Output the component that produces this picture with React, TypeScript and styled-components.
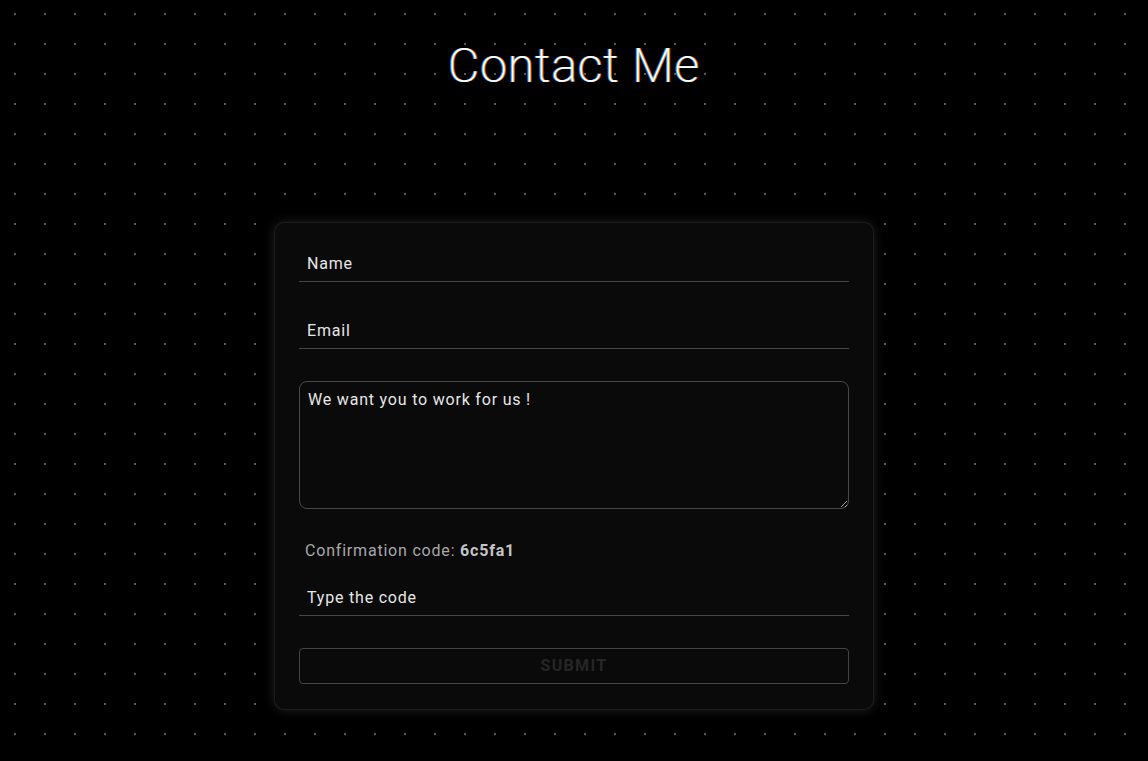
import React from "react";
import styled, { createGlobalStyle } from "styled-components";

const GlobalStyle = createGlobalStyle`
  html, body {
    margin: 0;
    padding: 0;
    background: #000;
  }
  body {
    font-family: Roboto, "Noto Sans", sans-serif;
    color: #e6e6e6;
  }
  * { box-sizing: border-box; }
`;

const Page = styled.main`
  min-height: 761px;
  background-color: #000;
  background-image: radial-gradient(circle at center, #5a5a5a 0.9px, transparent 1.2px);
  background-size: 30px 30px;
  background-position: 0 -1px;
  display: flex;
  flex-direction: column;
  align-items: center;
  padding-top: 38px;
`;

const Title = styled.h1`
  margin: 0;
  font-family: Roboto, sans-serif;
  font-weight: 200;
  font-size: 48px;
  line-height: 56px;
  color: #fff;
  letter-spacing: 1px;
  text-shadow: -1px 0 rgba(40, 170, 255, 0.85), 1px 0 rgba(255, 140, 40, 0.85);
`;

const Card = styled.form`
  margin-top: 128px;
  width: 600px;
  padding: 23px 24px 25px;
  background: #0a0a0a;
  border: 1px solid rgba(255, 255, 255, 0.08);
  border-radius: 10px;
  box-shadow: 0 0 12px rgba(255, 255, 255, 0.12);
  display: flex;
  flex-direction: column;
`;

const LineInput = styled.input<{ $gap?: number }>`
  display: block;
  width: 100%;
  height: 36px;
  margin-bottom: ${(p) => p.$gap ?? 31}px;
  padding: 0 8px;
  background: transparent;
  border: none;
  border-bottom: 1px solid #464646;
  outline: none;
  font-family: Roboto, sans-serif;
  font-size: 16px;
  letter-spacing: 0.8px;
  color: #e6e6e6;
  &::placeholder {
    color: #e6e6e6;
    opacity: 1;
  }
`;

const Message = styled.textarea`
  display: block;
  width: 100%;
  height: 128px;
  margin: 0;
  padding: 8px 8px;
  background: transparent;
  border: 1px solid #484848;
  border-radius: 8px;
  outline: none;
  resize: vertical;
  font-family: Roboto, sans-serif;
  font-size: 16px;
  line-height: 20px;
  letter-spacing: 0.8px;
  color: #e6e6e6;
  color-scheme: dark;
`;

const CodeLine = styled.p`
  margin: 32px 0 20px;
  padding-left: 6px;
  font-family: Roboto, sans-serif;
  font-size: 16px;
  line-height: 19px;
  letter-spacing: 0.8px;
  color: #a8a8a8;
`;

const Code = styled.b`
  font-weight: 700;
  color: #c4c4c4;
`;

const Submit = styled.button`
  display: block;
  width: 100%;
  height: 36px;
  margin-top: 1px;
  padding: 0 0 2px;
  background: transparent;
  border: 1px solid #444;
  border-radius: 4px;
  font-family: Roboto, sans-serif;
  font-weight: 700;
  font-size: 16px;
  letter-spacing: 1.3px;
  text-transform: uppercase;
  color: #262626;
  cursor: default;
`;

export default function App() {
  return (
    <>
      <GlobalStyle />
      <Page>
        <Title>Contact Me</Title>
        <Card onSubmit={(e) => e.preventDefault()}>
          <LineInput type="text" placeholder="Name" />
          <LineInput type="email" placeholder="Email" $gap={32} />
          <Message defaultValue="We want you to work for us !" />
          <CodeLine>
            Confirmation code: <Code>6c5fa1</Code>
          </CodeLine>
          <LineInput type="text" placeholder="Type the code" $gap={31} />
          <Submit type="submit" disabled>
            Submit
          </Submit>
        </Card>
      </Page>
    </>
  );
}
